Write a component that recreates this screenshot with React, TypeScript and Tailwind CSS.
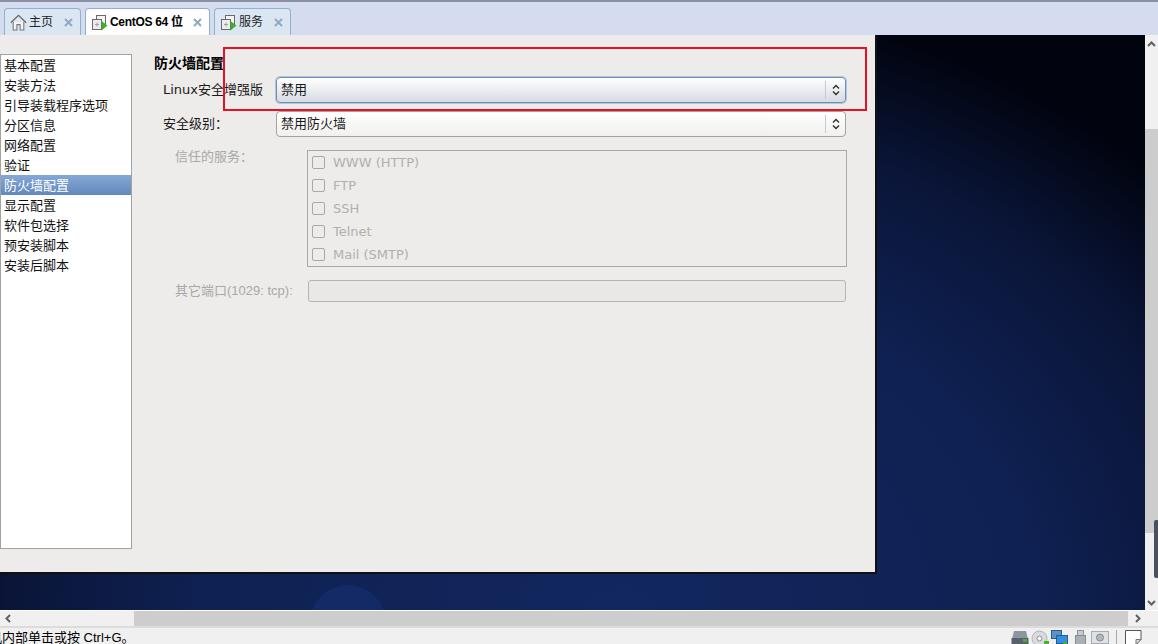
import React from "react";

const CJK = "font-['Liberation_Sans','Noto_Sans_CJK_SC',sans-serif]";

const navItems = [
  "基本配置",
  "安装方法",
  "引导装载程序选项",
  "分区信息",
  "网络配置",
  "验证",
  "防火墙配置",
  "显示配置",
  "软件包选择",
  "预安装脚本",
  "安装后脚本",
];

const services = ["WWW (HTTP)", "FTP", "SSH", "Telnet", "Mail (SMTP)"];

function VmIcon() {
  return (
    <svg width="17" height="17" viewBox="0 0 17 17" className="shrink-0">
      <rect x="5.5" y="1.5" width="9" height="9" fill="#f4f4f4" stroke="#6a6a6a" />
      <rect x="1.5" y="5.5" width="9" height="10" fill="#ececec" stroke="#6a6a6a" />
      <path d="M4 10.5h4M6 8.5v4" stroke="#a0a0a0" />
      <path d="M10.5 7l6 4.5-6 5z" fill="#3fae2a" />
    </svg>
  );
}

function HomeIcon() {
  return (
    <svg width="17" height="17" viewBox="0 0 16 16" className="shrink-0">
      <path d="M0.8 8.2L8 1.2l7.2 7" fill="none" stroke="#666" strokeWidth="1.2" />
      <path d="M3 7.5v7.5h3.5v-5h3v5H13V7.5" fill="#f4f4f4" stroke="#777" />
    </svg>
  );
}

function Tab({
  icon,
  label,
  active,
  width,
}: {
  icon: React.ReactNode;
  label: string;
  active?: boolean;
  width: string;
}) {
  return (
    <div
      className={`flex h-[27px] items-center rounded-t-[4px] border border-b-0 border-[#8fb0cf] pl-[5px] ${width} ${
        active ? "bg-white font-bold tracking-[-0.3px] text-black" : "bg-[#dbe6f3] text-[#222]"
      }`}
    >
      {icon}
      <span className="ml-[2px] whitespace-nowrap text-[12px] leading-none">{label}</span>
      <svg width="9" height="9" viewBox="0 0 9 9" className="ml-auto mr-[7px]">
        <path d="M1 1l7 7M8 1L1 8" stroke="#8fa9c4" strokeWidth="2" />
      </svg>
    </div>
  );
}

function SpinArrows() {
  return (
    <svg width="10" height="14" viewBox="0 0 10 14">
      <path d="M2 5.5L5 2.5l3 3M2 8.5l3 3 3-3" fill="none" stroke="#2d2d2d" strokeWidth="1.4" />
    </svg>
  );
}

function Combo({ value, focused }: { value: string; focused?: boolean }) {
  return (
    <div
      className={`flex h-[26px] w-[570px] items-center rounded-[4px] border pl-[4px] text-[13px] text-[#1a1a1a] ${
        focused
          ? "border-[#6f8fb8] bg-gradient-to-b from-white to-[#d6dbe2] shadow-[0_0_0_1px_#b4c6dc]"
          : "border-[#a5a39f] bg-gradient-to-b from-white to-[#f1f0ee]"
      }`}
    >
      <span className="flex-1">{value}</span>
      <div className="flex h-[18px] w-[20px] items-center justify-center border-l border-[#c9c9c9]">
        <SpinArrows />
      </div>
    </div>
  );
}

function ScrollArrow({ d }: { d: string }) {
  return (
    <svg width="9" height="9" viewBox="0 0 9 9">
      <path d={d} fill="none" stroke="#606060" strokeWidth="2" />
    </svg>
  );
}

function TrayIcons() {
  return (
    <div className="mr-[16px] mt-[2px] flex items-start">
      <svg width="18" height="14" viewBox="0 0 18 14" className="mr-[2px]">
        <path d="M3 1h12l2 8H1z" fill="#8c96a0" />
        <rect x="0.5" y="8" width="17" height="6" fill="#59626c" />
        <rect x="12" y="9" width="4" height="3" fill="#4caf2e" />
      </svg>
      <svg width="18" height="16" viewBox="0 0 18 16" className="mr-[2px]">
        <circle cx="8.5" cy="8.5" r="7.5" fill="#d9dcdf" stroke="#aeb2b6" />
        <circle cx="8.5" cy="8.5" r="2.5" fill="#f4f4f4" stroke="#8e9296" />
        <rect x="13" y="11" width="5" height="5" fill="#4caf2e" />
      </svg>
      <svg width="17" height="16" viewBox="0 0 17 16" className="mr-[7px]">
        <rect x="0.5" y="0.5" width="10" height="8" fill="#5c93c8" stroke="#2b5d8c" />
        <rect x="5.5" y="5.5" width="11" height="8" fill="#2f8fe0" stroke="#2b5d8c" />
        <rect x="12" y="12" width="4" height="4" fill="#4caf2e" />
      </svg>
      <svg width="11" height="16" viewBox="0 0 11 16" className="mr-[5px]">
        <rect x="2.5" y="0.5" width="6" height="5" fill="#c8ccd0" stroke="#8e9296" />
        <rect x="0.5" y="5.5" width="10" height="10" fill="#aab0b6" stroke="#868c92" />
      </svg>
      <svg width="18" height="14" viewBox="0 0 18 14" className="mr-[7px]">
        <rect x="0.5" y="1.5" width="17" height="12" fill="#dfe2e4" stroke="#a8acb0" />
        <circle cx="9" cy="7.5" r="3.5" fill="#b4b8bc" stroke="#85898d" />
      </svg>
      <div className="mr-[8px] h-[17px] w-px bg-[#a8a8a8]" />
      <svg width="17" height="15" viewBox="0 0 17 15">
        <path d="M0.5 0.5h15.5v9l-5 5h-10.5z" fill="#fff" stroke="#555" />
        <path d="M16 9.5l-5 5v-5z" fill="#ddd" stroke="#777" />
      </svg>
    </div>
  );
}

export default function App() {
  return (
    <div className={`relative flex h-[644px] w-[1158px] flex-col overflow-hidden bg-[#f0f0f0] ${CJK}`}>
      {/* tab strip */}
      <div className="flex h-[35px] shrink-0 items-end gap-[4px] border-t-2 border-[#8a93a6] bg-[#d6dcef] pl-[4px]">
        <Tab icon={<HomeIcon />} label="主页" width="w-[77px]" />
        <Tab icon={<VmIcon />} label="CentOS 64 位" active width="w-[125px]" />
        <Tab icon={<VmIcon />} label="服务" width="w-[77px]" />
      </div>

      <div className="flex min-h-0 flex-1">
        {/* guest screen */}
        <div className="relative min-w-0 flex-1 overflow-hidden bg-[radial-gradient(ellipse_760px_620px_at_620px_580px,#12275f_0%,#0f2152_55%,#0a1538_80%,#01040f_100%)]">
          <div className="absolute left-[310px] top-[550px] h-[76px] w-[76px] rounded-full bg-[#132a66]" />

          {/* installer window */}
          <div className="relative flex h-[537px] w-[875px] bg-[#edecea] shadow-[1px_1px_0_1px_#111]">
            <div className="mt-[19px] flex h-[495px] w-[132px] shrink-0 flex-col border border-[#a3a3a3] bg-white text-[13px] text-[#111]">
              {navItems.map((item) => (
                <div
                  key={item}
                  className={`h-[20px] pl-[3px] leading-[22px] ${
                    item === "防火墙配置"
                      ? "bg-gradient-to-b from-[#84a8d6] to-[#6288bd] text-white"
                      : ""
                  }`}
                >
                  {item}
                </div>
              ))}
            </div>

            <div className="flex min-w-0 flex-1 flex-col pl-[22px] pt-[19px] text-[13px] text-[#1a1a1a]">
              <div className="h-[18px] text-[14px] font-bold leading-[18px] text-black">防火墙配置</div>

              <div className="ml-[9px] mt-[5px] flex items-center">
                <span className="w-[113px] font-['DejaVu_Sans','Noto_Sans_CJK_SC',sans-serif]">Linux安全增强版</span>
                <Combo value="禁用" focused />
              </div>
              <div className="ml-[9px] mt-[8px] flex items-center">
                <span className="w-[113px]">安全级别：</span>
                <Combo value="禁用防火墙" />
              </div>

              <div className="ml-[21px] mt-[13px] flex">
                <span className="mt-[-3px] w-[132px] text-[#a8a8a6]">信任的服务：</span>
                <div className="flex h-[117px] w-[540px] flex-col justify-center gap-[7px] border border-[#a8a8a6] pl-[4px]">
                  {services.map((s) => (
                    <div key={s} className="flex h-[16px] items-center">
                      <div className="h-[13px] w-[13px] rounded-[2px] border border-[#a8a8a6] bg-[#edecea]" />
                      <span className="ml-[8px] font-['DejaVu_Sans',sans-serif] text-[#b0b0ae]">{s}</span>
                    </div>
                  ))}
                </div>
              </div>

              <div className="ml-[21px] mt-[13px] flex items-center">
                <span className="w-[133px] whitespace-nowrap text-[#a8a8a6]">其它端口(1029: tcp):</span>
                <div className="h-[22px] w-[538px] rounded-[3px] border border-[#b4b4b2] bg-[#e9e8e6]" />
              </div>
            </div>

            {/* red highlight drawn over the screenshot */}
            <div className="absolute left-[223px] top-[12px] h-[64px] w-[644px] border-2 border-[#e81123]" />
          </div>
        </div>

        {/* vertical scrollbar */}
        <div className="flex w-[13px] shrink-0 flex-col items-center bg-[#f0f0f0]">
          <div className="flex h-[18px] items-center">
            <ScrollArrow d="M1 6l3.5-3.5L8 6" />
          </div>
          <div className="mt-[76px] h-[404px] w-full bg-[#cdcdcd]" />
          <div className="mt-auto flex h-[16px] items-center">
            <ScrollArrow d="M1 3l3.5 3.5L8 3" />
          </div>
        </div>
      </div>

      {/* horizontal scrollbar */}
      <div className="flex h-[16px] shrink-0 items-center border-t border-white bg-[#f0f0f0]">
        <div className="flex w-[16px] justify-center">
          <ScrollArrow d="M6 1L2.5 4.5 6 8" />
        </div>
        <div className="ml-[118px] h-full w-[994px] bg-[#cdcdcd]" />
        <div className="ml-[1px] flex w-[16px] justify-center">
          <ScrollArrow d="M3 1l3.5 3.5L3 8" />
        </div>
      </div>

      {/* status bar */}
      <div className="flex h-[18px] shrink-0 items-start justify-between overflow-hidden border-t-2 border-[#dcdcdc] bg-[#f0f0f0]">
        <span className="ml-[-11px] mt-[2px] text-[13px] leading-[16px] text-black">机内部单击或按 Ctrl+G。</span>
        <TrayIcons />
      </div>

      {/* dark sliver of a handle at the right edge */}
      <div className="absolute left-[1154px] top-[520px] h-[58px] w-[6px] rounded-[2px] bg-[#4a505e]" />
    </div>
  );
}
